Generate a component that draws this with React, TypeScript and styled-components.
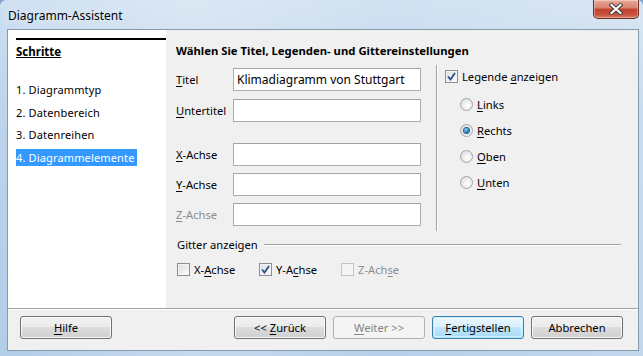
import React from "react";
import styled, { createGlobalStyle, css } from "styled-components";

const GlobalStyle = createGlobalStyle`
  html, body {
    margin: 0;
    padding: 0;
    background: #7fa3c9;
  }
  body {
    font-family: "Segoe UI", "Noto Sans", "Liberation Sans", sans-serif;
    font-size: 11px;
    color: #000;
  }
`;

const Window = styled.div`
  width: 643px;
  height: 356px;
  box-sizing: border-box;
  display: flex;
  flex-direction: column;
  background:
    linear-gradient(90deg, rgba(255,255,255,0.0) 0%, rgba(255,255,255,0.25) 30%, rgba(255,255,255,0.05) 60%, rgba(255,255,255,0.2) 100%),
    linear-gradient(180deg, #cfe0f1 0%, #bcd4ec 30%, #b3cde8 100%);
  border-radius: 6px 6px 0 0;
  overflow: hidden;
`;

const TitleBar = styled.div`
  height: 29px;
  display: flex;
  align-items: flex-start;
  padding: 0 4px 0 8px;
`;

const Title = styled.div`
  margin-top: 7px;
  font-size: 12px;
  color: #000;
  text-shadow: 0 0 6px rgba(255,255,255,0.9);
`;

const CloseButton = styled.div`
  margin-left: auto;
  width: 46px;
  height: 19px;
  box-sizing: border-box;
  border: 1px solid #6b2a22;
  border-top: none;
  border-radius: 0 0 5px 5px;
  background: linear-gradient(180deg, #e9a99a 0%, #d9826f 45%, #c0412f 50%, #c7513c 80%, #d8785c 100%);
  box-shadow: inset 0 0 0 1px rgba(255,255,255,0.35);
  display: flex;
  align-items: center;
  justify-content: center;
`;

const Client = styled.div`
  flex: 1;
  margin: 0 4px 5px 7px;
  border: 1px solid #8699ad;
  background: #f0f0f0;
  display: flex;
  flex-direction: column;
`;

const Main = styled.div`
  flex: 1;
  display: flex;
`;

const StepsPanel = styled.div`
  width: 158px;
  background: #fff;
  padding: 8px 0 0 8px;
  box-sizing: border-box;
`;

const StepsHeader = styled.div`
  border-top: 2px solid #000;
  padding-top: 4px;
  font-weight: bold;
  font-size: 11.5px;
  text-decoration: underline;
  height: 37px;
`;

const StepList = styled.div`
  display: flex;
  flex-direction: column;
  align-items: flex-start;
`;

const Step = styled.div<{ $active?: boolean }>`
  height: 17px;
  line-height: 17px;
  margin-bottom: 5.7px;
  padding-right: 2px;
  letter-spacing: 0.15px;
  ${(p) =>
    p.$active &&
    css`
      background: #3399ff;
      color: #fff;
    `}
`;

const Content = styled.div`
  flex: 1;
  padding: 13px 17px 0 10px;
  display: flex;
  flex-direction: column;
`;

const Heading = styled.div`
  font-weight: bold;
  font-size: 11.3px;
  height: 16px;
  line-height: 16px;
`;

const Upper = styled.div`
  display: flex;
  margin-top: 6px;
  height: 166px;
`;

const Form = styled.div`
  width: 245px;
  padding-top: 3px;
  display: flex;
  flex-direction: column;
`;

const FieldRow = styled.div<{ $gap: number }>`
  display: flex;
  align-items: center;
  height: 23px;
  margin-top: ${(p) => p.$gap}px;
`;

const Label = styled.span<{ $disabled?: boolean }>`
  width: 57px;
  font-size: 11.2px;
  color: ${(p) => (p.$disabled ? "#8d8d8d" : "#000")};
`;

const TextInput = styled.input`
  width: 188px;
  height: 23px;
  box-sizing: border-box;
  border: 1px solid #abadb3;
  border-top-color: #a0a3aa;
  background: #fff;
  padding: 0 3px;
  font: inherit;
  font-size: 12px;
  color: #000;
  outline: none;
`;

const VSeparator = styled.div`
  width: 1px;
  background: #a0a0a0;
  box-shadow: 1px 0 0 #fff;
  margin: 0 8px 0 15px;
`;

const LegendColumn = styled.div`
  display: flex;
  flex-direction: column;
  padding-top: 1px;
`;

const OptionRow = styled.label<{ $indent?: number; $height?: number }>`
  display: flex;
  align-items: center;
  gap: 4px;
  font-size: 11.2px;
  height: ${(p) => p.$height ?? 26}px;
  padding-left: ${(p) => p.$indent ?? 0}px;
`;

const LegendGap = styled.div`
  height: 5px;
`;

const BoxMark = styled.span<{ $disabled?: boolean }>`
  width: 13px;
  height: 13px;
  box-sizing: border-box;
  border: 1px solid ${(p) => (p.$disabled ? "#c4c4c4" : "#8e8f8f")};
  background: ${(p) =>
    p.$disabled
      ? "#f4f4f4"
      : "linear-gradient(135deg, #dcdcdc 0%, #f0f0f0 60%, #ffffff 100%)"};
  box-shadow: inset 0 0 0 1px #f4f4f4;
  display: flex;
  align-items: center;
  justify-content: center;
  flex-shrink: 0;
`;

const RadioMark = styled.span<{ $checked?: boolean }>`
  width: 13px;
  height: 13px;
  box-sizing: border-box;
  border-radius: 50%;
  border: 1px solid #a4a4a4;
  background: radial-gradient(circle at 60% 60%, #ffffff 0%, #f0f0f0 40%, #d4d4d4 100%);
  display: flex;
  align-items: center;
  justify-content: center;
  flex-shrink: 0;
  &::after {
    content: "";
    display: ${(p) => (p.$checked ? "block" : "none")};
    width: 5px;
    height: 5px;
    border-radius: 50%;
    background: radial-gradient(circle at 40% 35%, #8fd0f5 0%, #1c73b8 60%, #0d3e6e 100%);
    box-shadow: 0 0 0 1px #2c5f87;
  }
`;

const OptionText = styled.span<{ $disabled?: boolean }>`
  color: ${(p) => (p.$disabled ? "#8d8d8d" : "#000")};
`;

const Key = styled.span`
  text-decoration: underline;
  text-underline-offset: 2px;
`;

const GridSection = styled.div`
  margin-top: 5px;
  display: flex;
  flex-direction: column;
`;

const GroupTitle = styled.div`
  display: flex;
  align-items: center;
  gap: 6px;
  height: 16px;
  padding-left: 1px;
  font-size: 11.2px;
  &::after {
    content: "";
    flex: 1;
    height: 1px;
    background: #a0a0a0;
    box-shadow: 0 1px 0 #fff;
  }
`;

const GridOptions = styled.div`
  display: flex;
  margin-top: 9px;
  padding-left: 1px;
`;

const GridOption = styled(OptionRow)`
  width: 82px;
  height: 16px;
`;

const HSeparator = styled.div`
  height: 1px;
  background: #a0a0a0;
  box-shadow: 0 1px 0 #fff;
`;

const ButtonRow = styled.div`
  height: 41px;
  display: flex;
  align-items: center;
  padding: 0 15px 4px 12px;
  box-sizing: border-box;
  gap: 7px;
`;

const Button = styled.button<{ $variant?: "default" | "disabled" }>`
  width: 92px;
  height: 23px;
  box-sizing: border-box;
  border: 1px solid #707070;
  border-radius: 3px;
  font: inherit;
  font-size: 11.2px;
  color: #000;
  padding: 0;
  background: linear-gradient(180deg, #f2f2f2 0%, #ebebeb 49%, #dddddd 50%, #cfcfcf 100%);
  box-shadow: inset 0 0 0 1px rgba(255,255,255,0.8);
  ${(p) =>
    p.$variant === "default" &&
    css`
      border-color: #3c7fb1;
      background: linear-gradient(180deg, #eaf6fd 0%, #d9f0fc 49%, #bee6fd 50%, #a7d9f5 100%);
      box-shadow: inset 0 0 0 1px rgba(72, 216, 251, 0.25), inset 0 0 0 2px rgba(255,255,255,0.5);
    `}
  ${(p) =>
    p.$variant === "disabled" &&
    css`
      border-color: #adb2b5;
      background: #f4f4f4;
      color: #838383;
      box-shadow: none;
    `}
`;

const Push = styled.div`
  flex: 1;
`;

const CheckGlyph = () => (
  <svg width="9" height="9" viewBox="0 0 9 9">
    <path d="M1 4.5 L3.5 7.5 L8 1" fill="none" stroke="#2a4f8f" strokeWidth="1.8" />
  </svg>
);

const CloseGlyph = () => (
  <svg width="14" height="12" viewBox="0 0 14 12">
    <path d="M2.5 2 L11.5 10 M11.5 2 L2.5 10" stroke="#3a3a3a" strokeWidth="4" strokeLinecap="square" />
    <path d="M2.5 2 L11.5 10 M11.5 2 L2.5 10" stroke="#ffffff" strokeWidth="2.2" strokeLinecap="square" />
  </svg>
);

const Checkbox = ({ checked, disabled }: { checked?: boolean; disabled?: boolean }) => (
  <BoxMark $disabled={disabled}>{checked && <CheckGlyph />}</BoxMark>
);

const fields = [
  { key: "T", rest: "itel", value: "Klimadiagramm von Stuttgart", gap: 0 },
  { key: "U", rest: "ntertitel", value: "", gap: 8 },
  { key: "X", rest: "-Achse", value: "", gap: 21 },
  { key: "Y", rest: "-Achse", value: "", gap: 7 },
  { key: "Z", rest: "-Achse", value: "", gap: 7, disabled: true },
];

const positions = [
  { key: "L", rest: "inks" },
  { key: "R", rest: "echts", checked: true },
  { key: "O", rest: "ben" },
  { key: "U", rest: "nten" },
];

const steps = ["1. Diagrammtyp", "2. Datenbereich", "3. Datenreihen", "4. Diagrammelemente"];

export default function App() {
  return (
    <>
      <GlobalStyle />
      <Window>
        <TitleBar>
          <Title>Diagramm-Assistent</Title>
          <CloseButton>
            <CloseGlyph />
          </CloseButton>
        </TitleBar>
        <Client>
          <Main>
            <StepsPanel>
              <StepsHeader>Schritte</StepsHeader>
              <StepList>
                {steps.map((s, i) => (
                  <Step key={s} $active={i === steps.length - 1}>
                    {s}
                  </Step>
                ))}
              </StepList>
            </StepsPanel>
            <Content>
              <Heading>Wählen Sie Titel, Legenden- und Gittereinstellungen</Heading>
              <Upper>
                <Form>
                  {fields.map((f) => (
                    <FieldRow key={f.key} $gap={f.gap}>
                      <Label $disabled={f.disabled}>
                        <Key>{f.key}</Key>
                        {f.rest}
                      </Label>
                      <TextInput defaultValue={f.value} disabled={f.disabled} />
                    </FieldRow>
                  ))}
                </Form>
                <VSeparator />
                <LegendColumn>
                  <OptionRow $height={20}>
                    <Checkbox checked />
                    <OptionText>
                      Legende <Key>a</Key>nzeigen
                    </OptionText>
                  </OptionRow>
                  <LegendGap />
                  {positions.map((p) => (
                    <OptionRow key={p.rest} $indent={15}>
                      <RadioMark $checked={p.checked} />
                      <OptionText>
                        <Key>{p.key}</Key>
                        {p.rest}
                      </OptionText>
                    </OptionRow>
                  ))}
                </LegendColumn>
              </Upper>
              <GridSection>
                <GroupTitle>Gitter anzeigen</GroupTitle>
                <GridOptions>
                  <GridOption>
                    <Checkbox />
                    <OptionText>
                      X-<Key>A</Key>chse
                    </OptionText>
                  </GridOption>
                  <GridOption>
                    <Checkbox checked />
                    <OptionText>
                      Y-A<Key>c</Key>hse
                    </OptionText>
                  </GridOption>
                  <GridOption>
                    <Checkbox disabled />
                    <OptionText $disabled>
                      Z-Ach<Key>s</Key>e
                    </OptionText>
                  </GridOption>
                </GridOptions>
              </GridSection>
            </Content>
          </Main>
          <HSeparator />
          <ButtonRow>
            <Button>
              <Key>H</Key>ilfe
            </Button>
            <Push />
            <Button>
              &lt;&lt; <Key>Z</Key>urück
            </Button>
            <Button $variant="disabled">
              <Key>W</Key>eiter &gt;&gt;
            </Button>
            <Button $variant="default">
              <Key>F</Key>ertigstellen
            </Button>
            <Button>Abbrechen</Button>
          </ButtonRow>
        </Client>
      </Window>
    </>
  );
}
